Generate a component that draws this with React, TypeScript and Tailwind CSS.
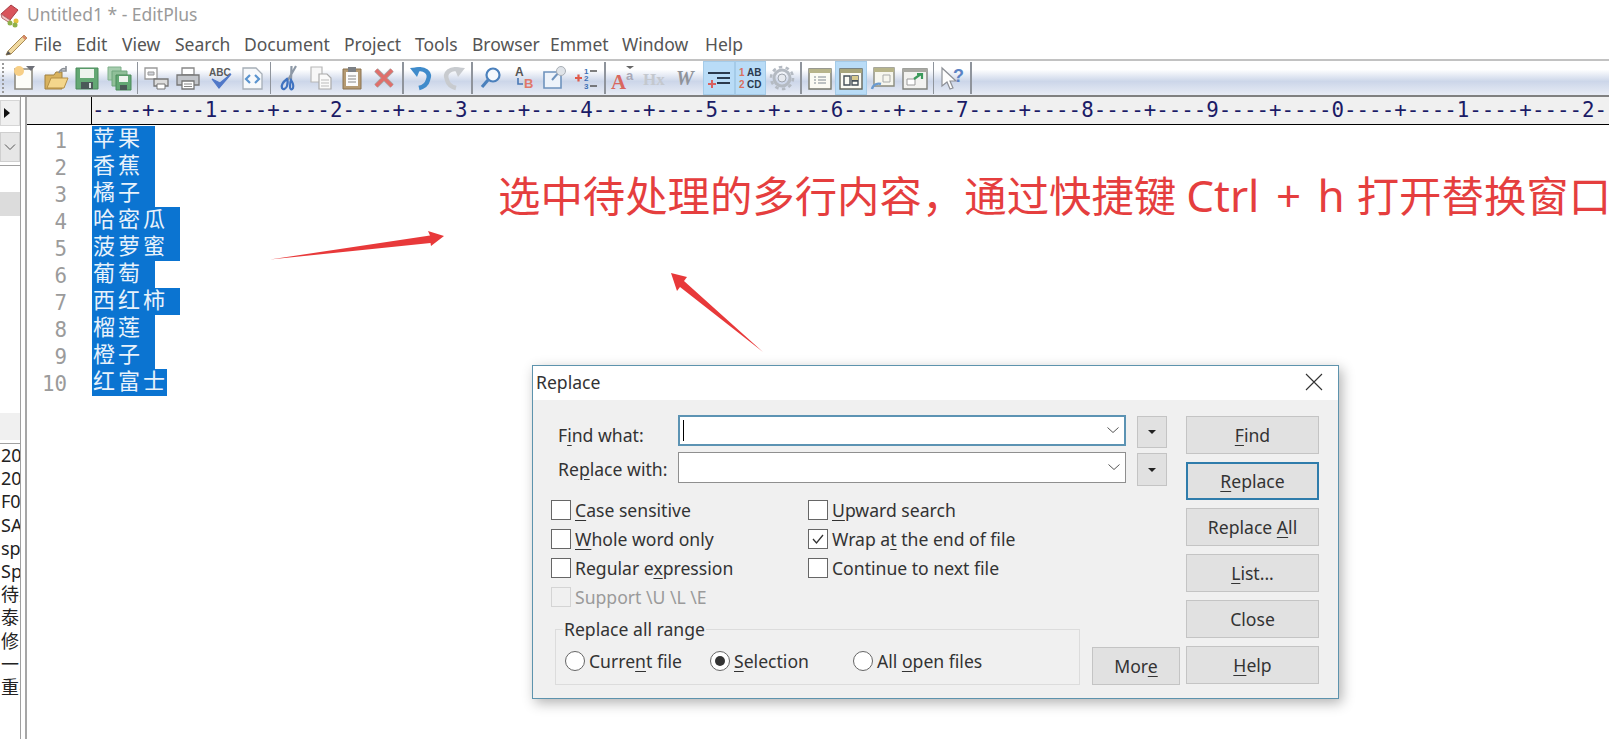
import React from 'react';

const Svg = ({ children }: { children: React.ReactNode }) => (
  <svg width="26" height="26" viewBox="0 0 26 26" fill="none" overflow="visible">{children}</svg>
);

const icons: Record<string, React.ReactNode> = {
  new: (
    <Svg>
      <path d="M4 4h17v20H4z" fill="#fdfdf8" stroke="#8d8a80" strokeWidth="1.6" />
      <path d="M15 1h9l-4 5z" fill="#6e7078" />
      <circle cx="8" cy="6" r="5" fill="#f7cf86" />
    </Svg>
  ),
  open: (
    <Svg>
      <path d="M2 10h9l2-3h6v17H2z" fill="#d8b25e" stroke="#a08040" />
      <path d="M4 23l4-10h17l-4 10z" fill="#f4d68c" stroke="#b58f45" />
      <path d="M16 8c1-4 4-5 7-4M23 1v5h-5" stroke="#8a8f96" strokeWidth="1.6" />
    </Svg>
  ),
  save: (
    <Svg>
      <path d="M2 3h22v21H2z" fill="#63a874" stroke="#4a8a5a" />
      <path d="M6 4h14v9H6z" fill="#eef4ee" />
      <path d="M7 17h12v7H7z" fill="#4b5a58" />
      <path d="M15 18h2v5h-2z" fill="#d8e0e0" />
    </Svg>
  ),
  saveAll: (
    <Svg>
      <path d="M2 2h13v13H2z" fill="#a6cdae" stroke="#7fb08a" />
      <path d="M6 6h15v15H6z" fill="#8fbf98" stroke="#6fa67c" />
      <path d="M10 10h15v15H10z" fill="#63a874" stroke="#4a8a5a" />
      <path d="M13 11h9v6H13z" fill="#eef4ee" />
      <path d="M14 20h7v5h-7z" fill="#4b5a58" />
    </Svg>
  ),
  preview: (
    <Svg>
      <path d="M2 3h12v11H2z" fill="#fff" stroke="#9a9a9a" strokeWidth="1.3" />
      <path d="M5 7h6v3H5z" fill="#d0d3d9" stroke="#9a9a9a" />
      <path d="M11 14h14v7H11z" fill="#dcdcdc" stroke="#777" strokeWidth="1.3" />
      <path d="M14 19h8v5h-8z" fill="#fff" stroke="#777" />
    </Svg>
  ),
  print: (
    <Svg>
      <path d="M7 3h12v7H7z" fill="#fff" stroke="#888" strokeWidth="1.3" />
      <path d="M2 10h22v10H2z" fill="#c2c5ca" stroke="#777" strokeWidth="1.3" />
      <path d="M7 16h12v8H7z" fill="#fff" stroke="#777" strokeWidth="1.3" />
      <path d="M9 19h8M9 21.500h8" stroke="#888" />
    </Svg>
  ),
  spell: (
    <Svg>
      <text x="2" y="11" fontSize="10" fontWeight="700" fontFamily="Liberation Sans" fill="#5a5a5a">ABC</text>
      <path d="M5 14l7 9L24 9l-11 9z" fill="#5078c8" stroke="#5078c8" strokeWidth="1.2" />
    </Svg>
  ),
  html: (
    <Svg>
      <path d="M4 3h13l6 6v15H4z" fill="#f7f9fb" stroke="#a6aeb7" strokeWidth="1.3" />
      <path d="M11 10l-4 4 4 4M16 10l4 4-4 4" stroke="#5a94cf" strokeWidth="2.2" />
    </Svg>
  ),
  cut: (
    <Svg>
      <path d="M12 15L20 1M15 15L15.500 1" stroke="#8d98a6" strokeWidth="2.2" />
      <path d="M11 14c-4 3-6 6-5 9 1 2 4 1 5-2s1-5 0-7z" stroke="#3f72c0" strokeWidth="2.200" />
      <path d="M15 15c2 3 3 5 2 8-1 2-3 2-3-1s0-5 1-7z" stroke="#3f72c0" strokeWidth="2.200" />
    </Svg>
  ),
  copy: (
    <Svg>
      <path d="M3 2h11v15H3z" fill="#f7f7f7" stroke="#b8b8b8" strokeWidth="1.2" />
      <path d="M11 9h8l4 4v11H11z" fill="#fafafa" stroke="#aaa" strokeWidth="1.2" />
      <path d="M13 15h8M13 18h8M13 21h8" stroke="#bbb" />
    </Svg>
  ),
  paste: (
    <Svg>
      <path d="M4 4h18v20H4z" fill="#b59a72" stroke="#8a7250" />
      <path d="M7 7h12v14H7z" fill="#fbfbfb" />
      <path d="M9 2h8v5H9z" fill="#7c8085" />
      <path d="M9 11h8M9 14h8M9 17h8" stroke="#888" />
    </Svg>
  ),
  del: (
    <Svg>
      <path d="M5 5l16 16M21 5L5 21" stroke="#a8a8a8" strokeWidth="5" />
      <path d="M5 5l16 16M21 5L5 21" stroke="#df6f6b" strokeWidth="3.4" />
    </Svg>
  ),
  undo: (
    <Svg>
      <path d="M6 5c10-3 16 3 13 10-1 4-5 7-9 8" stroke="#3f8bcb" strokeWidth="4.4" />
      <path d="M1 3l11-1-4 10z" fill="#3f8bcb" />
    </Svg>
  ),
  redo: (
    <Svg>
      <path d="M20 5C10 2 4 8 7 15c1 4 5 7 9 8" stroke="#c8cbcf" strokeWidth="4.4" />
      <path d="M25 3l-11-1 4 10z" fill="#c8cbcf" />
    </Svg>
  ),
  find: (
    <Svg>
      <circle cx="15" cy="10" r="6.500" fill="#f3f8fd" stroke="#4a80bc" strokeWidth="2.200" />
      <path d="M10 15l-6 7" stroke="#4a80bc" strokeWidth="3.200" />
    </Svg>
  ),
  replace: (
    <Svg>
      <text x="5" y="11" fontSize="12" fontWeight="700" fontFamily="Liberation Sans" fill="#555">A</text>
      <text x="14" y="23" fontSize="13" fontWeight="700" fontFamily="Liberation Sans" fill="#e0786a">B</text>
      <path d="M8 13v6h5" stroke="#4a78b5" strokeWidth="1.600" />
    </Svg>
  ),
  box: (
    <Svg>
      <path d="M3 7h17v16H3z" fill="#eef3fa" stroke="#6f93bd" strokeWidth="1.600" />
      <path d="M11 15l8-9" stroke="#6f93bd" strokeWidth="2" />
      <circle cx="20" cy="6" r="4.500" fill="#dfe3e8" stroke="#a9afb6" />
    </Svg>
  ),
  list: (
    <Svg>
      <path d="M2 13h7M5.500 9.500v7" stroke="#e05a4a" strokeWidth="2.200" />
      <text x="11" y="9" fontSize="8" fontWeight="700" fontFamily="Liberation Sans" fill="#3d6fb5">1</text>
      <text x="11" y="16" fontSize="8" fontWeight="700" fontFamily="Liberation Sans" fill="#3d6fb5">2</text>
      <text x="11" y="24" fontSize="8" fontWeight="700" fontFamily="Liberation Sans" fill="#3d6fb5">3</text>
      <path d="M17 6h7M17 21h7" stroke="#555" strokeWidth="1.600" />
    </Svg>
  ),
  font: (
    <Svg>
      <text x="0" y="24" fontSize="21" fontWeight="700" fontFamily="Liberation Serif" fill="#d9675f">A</text>
      <text x="15" y="15" fontSize="13" fontWeight="700" fontFamily="Liberation Sans" fill="#a8a8b8">a</text>
      <path d="M15 1h8l-4 3z" fill="#666" />
    </Svg>
  ),
  hx: (
    <Svg>
      <text x="1" y="20" fontSize="17" fontWeight="700" fontFamily="Liberation Serif" fill="#c4c8ce">Hx</text>
    </Svg>
  ),
  w: (
    <Svg>
      <text x="2" y="20" fontSize="20" fontWeight="700" fontStyle="italic" fontFamily="Liberation Serif" fill="#8f939a">W</text>
    </Svg>
  ),
  indent: (
    <Svg>
      <path d="M2 8h22M11 13h13M11 18h13" stroke="#2b3a4d" strokeWidth="2.200" />
      <path d="M2 19h8M6 15v8" stroke="#d9605f" strokeWidth="2" />
    </Svg>
  ),
  abcd: (
    <Svg>
      <text x="2" y="11" fontSize="10" fontWeight="700" fontFamily="Liberation Sans" fill="#d9705f">1</text>
      <text x="10" y="11" fontSize="10" fontWeight="700" fontFamily="Liberation Sans" fill="#2b3a4d">AB</text>
      <text x="2" y="23" fontSize="10" fontWeight="700" fontFamily="Liberation Sans" fill="#d9705f">2</text>
      <text x="10" y="23" fontSize="10" fontWeight="700" fontFamily="Liberation Sans" fill="#2b3a4d">CD</text>
    </Svg>
  ),
  gear: (
    <Svg>
      <circle cx="13" cy="13" r="8" stroke="#b4bac2" strokeWidth="3" />
      <circle cx="13" cy="13" r="11" stroke="#b4bac2" strokeWidth="2.600" strokeDasharray="3.500 3.400" />
      <circle cx="13" cy="13" r="4" fill="#e6e9ee" stroke="#a0a6ae" />
    </Svg>
  ),
  doc: (
    <Svg>
      <path d="M2 4h22v20H2z" fill="#fbfbf4" stroke="#77786c" strokeWidth="1.400" />
      <path d="M2 4h22v4H2z" fill="#b7b48a" />
      <path d="M7 12h2M7 15h2M7 18h2M11 12h8M11 15h8M11 18h8" stroke="#7f8790" />
    </Svg>
  ),
  pane: (
    <Svg>
      <path d="M2 4h22v20H2z" fill="#fbfbf4" stroke="#66675c" strokeWidth="1.400" />
      <path d="M2 4h22v4H2z" fill="#a7a47a" />
      <path d="M6 11h6v9H6zM14 11h6v4h-6zM14 16h6v4h-6z" stroke="#465058" strokeWidth="1.400" />
      <path d="M14 11h6v4h-6z" fill="#d7c98c" />
    </Svg>
  ),
  link: (
    <Svg>
      <path d="M4 3h20v18H4z" fill="#f6f6ee" stroke="#8a8b7c" strokeWidth="1.400" />
      <path d="M4 3h20v4H4z" fill="#b7b48a" />
      <path d="M13 10h7v7h-7z" stroke="#a9abaa" />
      <path d="M2 24c1-5 6-6 9-5" stroke="#6a9ad0" strokeWidth="2.400" />
    </Svg>
  ),
  win: (
    <Svg>
      <path d="M1 4h24v20H1z" fill="#f2f2f0" stroke="#80827c" strokeWidth="1.400" />
      <path d="M1 4h24v3H1z" fill="#a9a9a3" />
      <path d="M5 14h8v6H5z" fill="#fff" stroke="#9a9a9a" />
      <path d="M12 14l7-5M15 9h5v5" stroke="#3c9a5c" strokeWidth="2.200" />
    </Svg>
  ),
  help: (
    <Svg>
      <path d="M3 3v18l5-4 3 7 3-1-3-7h6z" fill="#fdfdfd" stroke="#8d9096" strokeWidth="1.200" />
      <text x="14" y="17" fontSize="18" fontWeight="700" fontFamily="Liberation Sans" fill="#5b83c4">?</text>
    </Svg>
  ),
};

type ToolItem = { id?: string; active?: boolean; sep?: boolean };

const toolbar: ToolItem[] = [
  { id: 'new' }, { id: 'open' }, { id: 'save' }, { id: 'saveAll' }, { sep: true },
  { id: 'preview' }, { id: 'print' }, { id: 'spell' }, { id: 'html' }, { sep: true },
  { id: 'cut' }, { id: 'copy' }, { id: 'paste' }, { id: 'del' }, { sep: true },
  { id: 'undo' }, { id: 'redo' }, { sep: true },
  { id: 'find' }, { id: 'replace' }, { id: 'box' }, { id: 'list' }, { sep: true },
  { id: 'font' }, { id: 'hx' }, { id: 'w' }, { id: 'indent', active: true }, { id: 'abcd', active: true }, { id: 'gear' }, { sep: true },
  { id: 'doc' }, { id: 'pane', active: true }, { id: 'link' }, { id: 'win' }, { sep: true },
  { id: 'help' }, { sep: true },
];

const menus = [
  ['File', 'w-[28px] mr-[14px]'],
  ['Edit', 'w-[32px] mr-[14px]'],
  ['View', 'w-[40px] mr-[13px]'],
  ['Search', 'w-[55px] mr-[14px]'],
  ['Document', 'w-[86px] mr-[14px]'],
  ['Project', 'w-[56px] mr-[15px]'],
  ['Tools', 'w-[43px] mr-[14px]'],
  ['Browser', 'w-[65px] mr-[13px]'],
  ['Emmet', 'w-[59px] mr-[13px]'],
  ['Window', 'w-[65px] mr-[18px]'],
  ['Help', 'w-[39px]'],
];

const fruit = [
  { name: '苹果', cols: 'w-[63px]' },
  { name: '香蕉', cols: 'w-[63px]' },
  { name: '橘子', cols: 'w-[63px]' },
  { name: '哈密瓜', cols: 'w-[88px]' },
  { name: '菠萝蜜', cols: 'w-[88px]' },
  { name: '葡萄', cols: 'w-[63px]' },
  { name: '西红柿', cols: 'w-[88px]' },
  { name: '榴莲', cols: 'w-[63px]' },
  { name: '橙子', cols: 'w-[63px]' },
  { name: '红富士', cols: 'w-[75px]' },
];

const sideFiles = ['2019', '2020', 'F001', 'SALE', 'spec', 'Spec', '待办', '泰国', '修改', '一览', '重要'];

let rulerText = '';
for (let i = 1; i <= 13; i++) rulerText += '----+----' + (i % 10);

const Mn = ({ children }: { children: React.ReactNode }) => <u className="underline-offset-[3px]">{children}</u>;

const Check = ({ checked, disabled, children }: { checked?: boolean; disabled?: boolean; children: React.ReactNode }) => (
  <div className="flex h-[29px] items-center gap-[4px]">
    <div className={`flex h-[20px] w-[20px] items-center justify-center border ${disabled ? 'border-[#d4d4d4] bg-[#f0f0f0]' : 'border-[#666] bg-white'}`}>
      {checked && (
        <svg width="14" height="14" viewBox="0 0 14 14" fill="none">
          <path d="M2 7l3.500 4L12 3" stroke="#333" strokeWidth="1.300" />
        </svg>
      )}
    </div>
    <span className={disabled ? 'text-[#9a9a9a]' : ''}>{children}</span>
  </div>
);

const Radio = ({ on, className, children }: { on?: boolean; className: string; children: React.ReactNode }) => (
  <div className={`flex items-center gap-[4px] ${className}`}>
    <div className="flex h-[20px] w-[20px] items-center justify-center rounded-full border border-[#666] bg-white">
      {on && <div className="h-[10px] w-[10px] rounded-full bg-[#333]" />}
    </div>
    <span>{children}</span>
  </div>
);

const Btn = ({ focus, className, children }: { focus?: boolean; className?: string; children: React.ReactNode }) => (
  <div className={`flex h-[38px] items-center justify-center bg-[#e1e1e1] ${focus ? 'border-2 border-[#2f7cab]' : 'border border-[#c4c4c4]'} ${className ?? ''}`}>
    <span>{children}</span>
  </div>
);

const Combo = ({ focus, className }: { focus?: boolean; className?: string }) => (
  <div className={`flex h-[31px] w-[448px] items-center justify-between bg-white pl-[3px] pr-[4px] ${focus ? 'border-2 border-[#5c93b3]' : 'border border-[#8f8f8f]'} ${className ?? ''}`}>
    <div className={focus ? 'h-[21px] w-px bg-black' : ''} />
    <svg width="16" height="16" viewBox="0 0 16 16" fill="none" className="mb-[2px] mr-[-1px]">
      <path d="M2.500 5.500L8 10.500l5.500-5" stroke="#555" />
    </svg>
  </div>
);

const SmallDrop = ({ className }: { className: string }) => (
  <div className={`flex w-[30px] items-center justify-center border border-[#c4c4c4] bg-[#e1e1e1] ${className}`}>
    <div className="h-0 w-0 border-x-[4px] border-t-[4px] border-x-transparent border-t-[#222]" />
  </div>
);

export default function App() {
  return (
    <div className="relative flex h-[739px] w-[1609px] flex-col overflow-hidden bg-white font-['Noto_Sans','Noto_Sans_CJK_SC',sans-serif] text-[#333]">
      {/* title bar */}
      <div className="flex h-[29px] items-center">
        <svg width="24" height="26" viewBox="0 0 24 26" fill="none" className="ml-[-1px] shrink-0">
          <path d="M2 12L12 3l7 5-8 10z" fill="#d9555c" stroke="#a83c44" />
          <path d="M2 12l9 6v3l-8-5z" fill="#f2c9c9" stroke="#b56a6e" />
          <circle cx="11" cy="21" r="2.500" fill="#8fb04a" />
          <circle cx="17" cy="19" r="2.500" fill="#e3c23c" />
          <circle cx="16" cy="23" r="2.500" fill="#8fb04a" />
        </svg>
        <span className="ml-[4px] text-[17.500px] text-[#9a9a9a]">Untitled1 * - EditPlus</span>
      </div>

      {/* menu bar */}
      <div className="flex h-[30px] items-center text-[17.500px] text-[#555]">
        <svg width="26" height="26" viewBox="0 0 26 26" fill="none" className="ml-[3px] mr-[5px] shrink-0">
          <path d="M5 20L21 4l3 3L8 23l-5 1z" fill="#f0d9a0" stroke="#a88a54" />
          <path d="M3 24l2-4 3 3z" fill="#555" />
          <path d="M21 4l3 3-2 2-3-3z" fill="#d98a6a" />
        </svg>
        {menus.map(([label, cls]) => (
          <span key={label} className={`whitespace-nowrap ${cls}`}>{label}</span>
        ))}
      </div>

      {/* toolbar */}
      <div className="flex h-[38px] items-center border-y-2 border-b-[#808080] border-t-[#c2c2c2] bg-linear-to-b from-white from-[25%] via-[#ccd6e9] via-[60%] to-[#e8ecf5] pl-[2px]">
        <div className="mr-[4px] h-[30px] w-px shrink-0 border-l-2 border-dotted border-[#9a9a9a]" />
        {toolbar.map((t, i) =>
          t.sep ? (
            <div key={i} className="mx-[2.200px] h-[32px] w-[1.500px] shrink-0 bg-[#8f949c]" />
          ) : (
            <div key={i} className={`flex h-[34px] w-[31.700px] shrink-0 items-center justify-center ${t.active ? 'border border-[#a5cbe8] bg-[#b9dcf7]' : ''}`}>
              {icons[t.id as string]}
            </div>
          ),
        )}
      </div>

      <div className="flex min-h-0 flex-1">
        {/* left side panel */}
        <div className="flex w-[27px] shrink-0 border-r-2 border-[#a6a6a6]">
          <div className="flex w-[21px] flex-col border-r border-[#a0a0a0] pt-[3px]">
            <div className="flex h-[26px] w-[20px] items-center border border-[#d6d6d6] bg-[#f0f0f0] pl-[3px]">
              <div className="h-0 w-0 border-y-[5px] border-l-[6px] border-y-transparent border-l-[#111]" />
            </div>
            <div className="mt-[6px] flex h-[30px] w-[20px] items-center justify-center border border-[#cfcfcf] bg-[#e6e6e6]">
              <svg width="12" height="12" viewBox="0 0 12 12" fill="none">
                <path d="M1 3.500L6 8.500l5-5" stroke="#555" />
              </svg>
            </div>
            <div className="mt-[3px] h-[248px] border-t border-[#a0a0a0] pt-[26px]">
              <div className="h-[24px] bg-[#dcdcdc]" />
            </div>
            <div className="h-[27px] bg-[#f0f0f0]" />
            <div className="mt-[3px] flex flex-col overflow-hidden border-t border-[#a0a0a0] text-[18px] text-[#222]">
              {sideFiles.map((f) => (
                <div key={f} className="h-[23.200px] overflow-hidden whitespace-nowrap pl-px leading-[23px]">{f}</div>
              ))}
            </div>
          </div>
        </div>

        {/* editor */}
        <div className="flex min-w-0 flex-1 flex-col">
          <div className="flex h-[28px] border-b border-black bg-[#f0f0f0]">
            <div className="w-[65px] shrink-0 border-r border-black" />
            <div className="overflow-hidden whitespace-nowrap font-['DejaVu_Sans_Mono',monospace] text-[20.800px] leading-[27px] text-[#1b1b66]">
              {rulerText}
            </div>
          </div>
          <div className="flex pt-px">
            <div className="w-[65px] shrink-0 pr-[25px] pt-[2px] text-right font-['DejaVu_Sans_Mono',monospace] text-[20.800px] leading-[27px] text-[#9b9b9b]">
              {fruit.map((_, i) => (
                <div key={i} className="h-[27px]">{i + 1}</div>
              ))}
            </div>
            <div>
              {fruit.map((f) => (
                <div key={f.name} className={`h-[27px] whitespace-nowrap bg-[#0b74d1] pl-px text-[22px] leading-[23px] tracking-[3px] text-[#e8f2fb] ${f.cols}`}>
                  {f.name}
                </div>
              ))}
            </div>
          </div>
        </div>
      </div>

      {/* red annotation */}
      <div className="absolute left-[498px] top-[166px] whitespace-nowrap font-['Noto_Sans_CJK_SC',sans-serif] text-[42.400px] leading-[56px] text-[#e53e3e]">
        选中待处理的多行内容，通过快捷键<span className="ml-[10px] mr-[12px] font-['Noto_Sans',sans-serif] text-[44px] [word-spacing:5px]">Ctrl + h</span>打开替换窗口
      </div>
      <svg className="absolute left-0 top-0" width="1609" height="739" fill="none">
        <path d="M270 259.500L430 235.500 428 231 444 236 431 246 430.500 243z" fill="#e8393a" />
        <path d="M763 352L680 287 677 291 671 273 687 277 684 281z" fill="#e8393a" />
      </svg>

      {/* replace dialog */}
      <div className="absolute left-[532px] top-[365px] flex h-[334px] w-[807px] flex-col border border-[#5d93ad] bg-[#f0f0f0] text-[17.600px] leading-[24px] text-[#333] shadow-[3px_4px_12px_rgba(0,0,0,0.3)]">
        <div className="flex h-[34px] shrink-0 items-center justify-between bg-white pb-[2px] pl-[3px] pr-[15px]">
          <span>Replace</span>
          <svg width="18" height="18" viewBox="0 0 18 18" fill="none">
            <path d="M1 1l16 16M17 1L1 17" stroke="#333" strokeWidth="1.100" />
          </svg>
        </div>
        <div className="flex flex-1 pl-[18px]">
          <div className="flex w-[634px] flex-col">
            <div className="h-[95px] pt-[15px]">
              <div className="flex items-start">
                <span className="w-[127px] pl-[7px] pt-[7px] leading-[26px]">F<Mn>i</Mn>nd what:</span>
                <Combo focus />
                <SmallDrop className="ml-[11px] mt-px h-[32px]" />
              </div>
              <div className="mt-[4px] flex items-start">
                <span className="w-[127px] pl-[7px] pt-[4px] leading-[26px]">Re<Mn>p</Mn>lace with:</span>
                <Combo />
                <SmallDrop className="ml-[11px] mt-px h-[33px]" />
              </div>
            </div>
            <div className="flex">
              <div className="w-[257px]">
                <Check><Mn>C</Mn>ase sensitive</Check>
                <Check><Mn>W</Mn>hole word only</Check>
                <Check>Regular e<Mn>x</Mn>pression</Check>
                <Check disabled>Support \U \L \E</Check>
              </div>
              <div>
                <Check><Mn>U</Mn>pward search</Check>
                <Check checked>Wrap a<Mn>t</Mn> the end of file</Check>
                <Check>Continue to next file</Check>
              </div>
            </div>
            <div className="mt-[18px] flex items-start">
              <div className="relative ml-[4px] flex h-[56px] w-[525px] items-center border border-[#dcdcdc] pl-[9px] pt-[7px]">
                <span className="absolute left-[7px] top-[-13px] bg-[#f0f0f0] px-px">Replace all range</span>
                <Radio className="w-[145px]">Curre<Mn>n</Mn>t file</Radio>
                <Radio on className="w-[143px]"><Mn>S</Mn>election</Radio>
                <Radio className="w-[180px]">All <Mn>o</Mn>pen files</Radio>
              </div>
              <Btn className="ml-[12px] mt-[18px] w-[88px]">Mor<Mn>e</Mn></Btn>
            </div>
          </div>
          <div className="ml-[1px] flex w-[133px] flex-col gap-[8px] pt-[16px]">
            <Btn><Mn>F</Mn>ind</Btn>
            <Btn focus><Mn>R</Mn>eplace</Btn>
            <Btn>Replace <Mn>A</Mn>ll</Btn>
            <Btn><Mn>L</Mn>ist...</Btn>
            <Btn>Close</Btn>
            <Btn><Mn>H</Mn>elp</Btn>
          </div>
        </div>
      </div>
    </div>
  );
}
